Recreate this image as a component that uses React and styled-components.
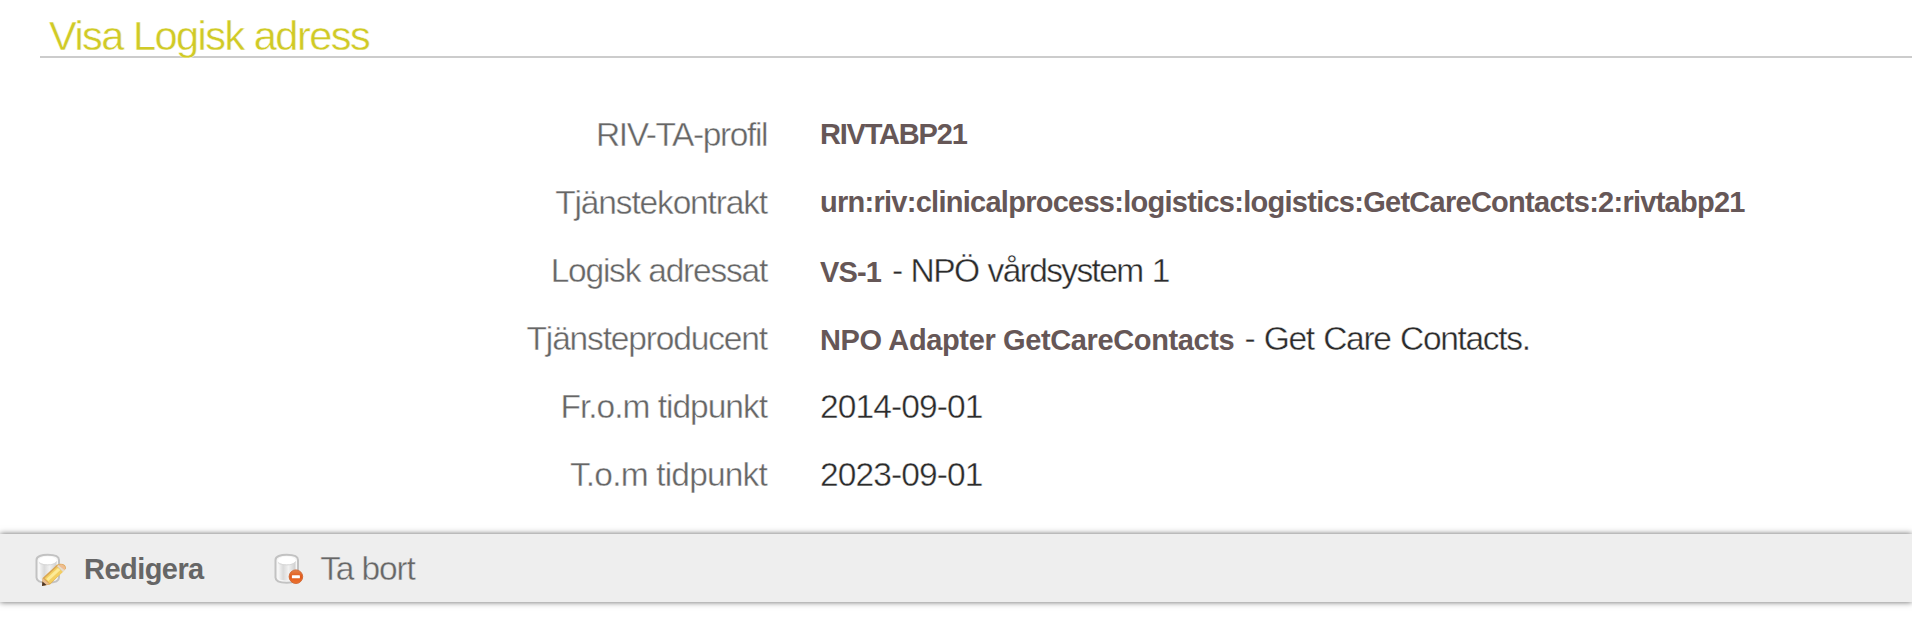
import React from "react";
import styled, { createGlobalStyle } from "styled-components";

const GlobalStyle = createGlobalStyle`
  body {
    margin: 0;
    background: #fff;
    color: #2b2b2b;
    font-family: "Liberation Sans", "Helvetica Neue", Arial, sans-serif;
  }
`;

const Page = styled.main`
  display: flex;
  flex-direction: column;
  height: 638px;
  overflow: hidden;
`;

const Heading = styled.h1`
  margin: 0 0 43px 40px;
  padding: 16px 0 0 9px;
  border-bottom: 2px solid #ccc;
  color: #d0ca26;
  font-size: 41.5px;
  font-weight: 400;
  line-height: 40px;
  letter-spacing: -1.52px;
  white-space: nowrap;
  -webkit-text-stroke: 0.4px #fff;
`;

const Details = styled.dl`
  display: flex;
  flex-direction: column;
  margin: 0 0 24.5px;
`;

const Row = styled.div`
  display: grid;
  grid-template-columns: 767px 1fr;
  column-gap: 53px;
  height: 68px;
  line-height: 68px;
  white-space: nowrap;
`;

const Term = styled.dt`
  color: #666;
  font-size: 33.5px;
  text-align: right;
  letter-spacing: ${(p) => p.$tracking}px;
  -webkit-text-stroke: 0.4px #fff;
`;

const Value = styled.dd`
  margin: 0;
  font-size: ${(p) => (p.$strongOnly ? 29 : 33.5)}px;
  line-height: ${(p) => (p.$strongOnly ? 66 : 68)}px;
`;

const Strong = styled.strong`
  color: #665757;
  font-size: 29px;
  font-weight: 700;
  letter-spacing: ${(p) => p.$tracking}px;
`;

const Light = styled.span`
  margin-left: ${(p) => p.$gap || 0}px;
  letter-spacing: ${(p) => p.$tracking}px;
  word-spacing: 1.5px;
  -webkit-text-stroke: 0.4px #fff;
`;

const Toolbar = styled.footer`
  display: flex;
  box-sizing: border-box;
  height: 68.5px;
  padding: 2px 0 0 34px;
  gap: 69.5px;
  background: #eee;
  box-shadow: 0 0 6px rgba(0, 0, 0, 0.62);
`;

const Action = styled.a`
  display: flex;
  align-items: center;
  gap: ${(p) => p.$gap}px;
  color: #666;
  font-size: 33.5px;
  line-height: 66px;
  white-space: nowrap;
`;

const ActionLabel = styled.span`
  letter-spacing: -1.15px;
  -webkit-text-stroke: 0.4px #eee;
`;

const ActionStrong = styled.span`
  b {
    font-size: 29px;
    letter-spacing: -0.55px;
  }
`;

const Icon = styled.svg`
  flex: none;
  width: 32px;
  height: 32px;
  margin-top: 2px;
  overflow: visible;
`;

function Cylinder({ id }) {
  return (
    <>
      <defs>
        <linearGradient id={id} x1="0" x2="1">
          <stop offset="0" stopColor="#f8f8f8" />
          <stop offset="0.3" stopColor="#dadada" />
          <stop offset="0.6" stopColor="#f1f1f1" />
          <stop offset="1" stopColor="#cecece" />
        </linearGradient>
      </defs>
      <path
        d="M2.5 6C2.5 2.3 7.5 .8 13.7 .8S25 2.3 25 6v17.6c0 3.6-5 5.2-11.3 5.2S2.5 27.2 2.5 23.6Z"
        fill="#f6f6f6"
        stroke="#c2c2c2"
        strokeWidth="2"
      />
      <path
        d="M5 7v16c0 2.4 4 3.6 8.7 3.6s8.8-1.2 8.8-3.6V7Z"
        fill={`url(#${id})`}
      />
      <ellipse cx="13.7" cy="6.5" rx="8.9" ry="4" fill="#fff" />
      <path d="M5 8.5c2 3.2 15 3.2 17.4 0" fill="none" stroke="#d8d8d8" strokeWidth="1" />
    </>
  );
}

function EditIcon() {
  return (
    <Icon viewBox="0 0 32 32" aria-hidden="true">
      <Cylinder id="edit-body" />
      <path d="M8 32 8.6 24 22.9 10.8Q25.6 9 28.8 10T32 14.6L16 30.6Z" fill="#d9a552" />
      <path d="M10.6 24.3 23 12.8l6 5L15.9 29.7Z" fill="#f3cf62" />
      <path d="m12.2 25 11.8-11 2.4 2L14.4 27Z" fill="#fdeb98" />
      <path d="m23 12.2 1.9-1.6 6.2 5.2-2.2 2.2Z" fill="#e6dccb" />
      <path d="M25.2 10.8q2.4-1.1 4.7.6t1.5 3.6l-1 1-6-4.7Z" fill="#efbd90" />
      <path d="M9.2 24.5 15.2 30 8 32Z" fill="#e9bd90" />
      <path d="m8.4 27.6 4.2 3.3L8 32Z" fill="#4a3425" />
    </Icon>
  );
}

function DeleteIcon() {
  return (
    <Icon viewBox="0 0 32 32" aria-hidden="true">
      <Cylinder id="delete-body" />
      <defs>
        <linearGradient id="badge" x1="0" y1="0" x2="0" y2="1">
          <stop offset="0" stopColor="#e5834a" />
          <stop offset="0.5" stopColor="#e2591a" />
          <stop offset="1" stopColor="#ec7431" />
        </linearGradient>
      </defs>
      <circle cx="22.9" cy="22.7" r="6.8" fill="url(#badge)" stroke="#cf6430" strokeWidth="0.9" />
      <rect x="18.9" y="21.3" width="8" height="3" rx="0.5" fill="#fff" />
    </Icon>
  );
}

const rows = [
  { term: "RIV-TA-profil", tt: -1.4, strong: "RIVTABP21", st: -1.2 },
  {
    term: "Tjänstekontrakt",
    tt: -1.15,
    strong: "urn:riv:clinicalprocess:logistics:logistics:GetCareContacts:2:rivtabp21",
    st: -0.73,
  },
  { term: "Logisk adressat", tt: -1.22, strong: "VS-1", st: -0.9, text: "- NPÖ vårdsystem 1", lt: -1.62, gap: 11 },
  {
    term: "Tjänsteproducent",
    tt: -1.15,
    strong: "NPO Adapter GetCareContacts",
    st: -0.37,
    text: "- Get Care Contacts.",
    lt: -1.32,
    gap: 10,
  },
  { term: "Fr.o.m tidpunkt", tt: -1, text: "2014-09-01", lt: -0.88 },
  { term: "T.o.m tidpunkt", tt: -0.82, text: "2023-09-01", lt: -0.88 },
];

export default function App() {
  return (
    <>
      <GlobalStyle />
      <Page>
        <Heading>Visa Logisk adress</Heading>
        <Details>
          {rows.map((r) => (
            <Row key={r.term}>
              <Term $tracking={r.tt}>{r.term}</Term>
              <Value $strongOnly={!r.text}>
                {r.strong && <Strong $tracking={r.st}>{r.strong}</Strong>}
                {r.text && (
                  <Light $tracking={r.lt} $gap={r.gap}>
                    {r.text}
                  </Light>
                )}
              </Value>
            </Row>
          ))}
        </Details>
        <Toolbar>
          <Action $gap={18}>
            <EditIcon />
            <ActionStrong>
              <b>Redigera</b>
            </ActionStrong>
          </Action>
          <Action $gap={15}>
            <DeleteIcon />
            <ActionLabel>Ta bort</ActionLabel>
          </Action>
        </Toolbar>
      </Page>
    </>
  );
}
